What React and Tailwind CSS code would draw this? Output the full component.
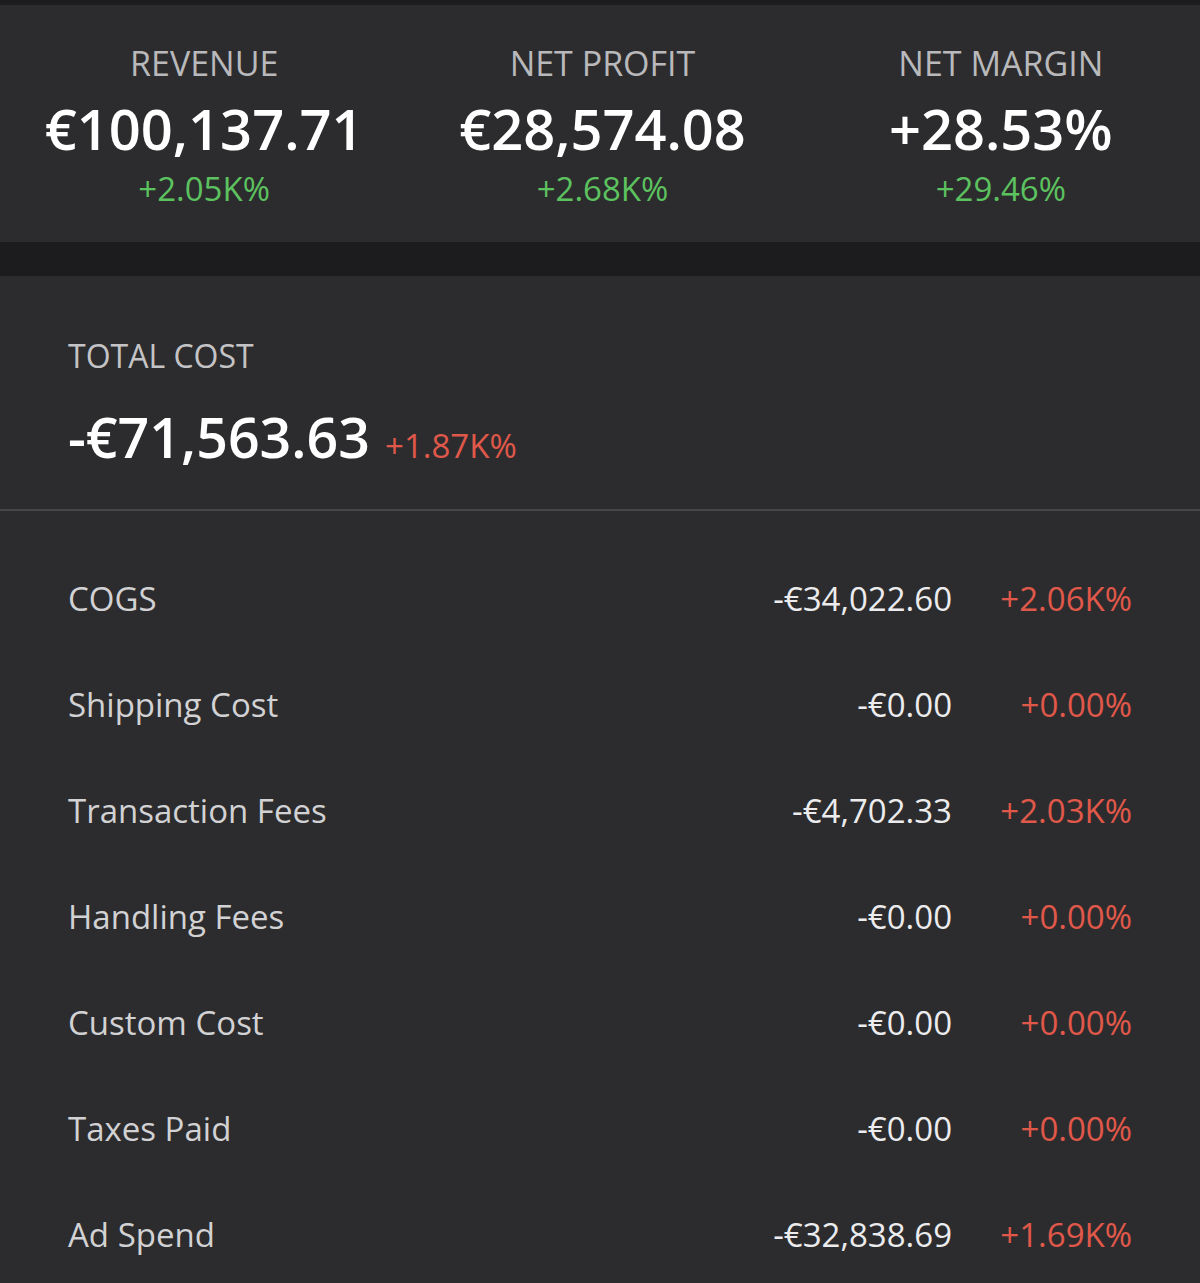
const stats = [
  { label: 'REVENUE', value: '€100,137.71', change: '+2.05K%' },
  { label: 'NET PROFIT', value: '€28,574.08', change: '+2.68K%' },
  { label: 'NET MARGIN', value: '+28.53%', change: '+29.46%' },
];

const costs = [
  { label: 'COGS', value: '-€34,022.60', change: '+2.06K%' },
  { label: 'Shipping Cost', value: '-€0.00', change: '+0.00%' },
  { label: 'Transaction Fees', value: '-€4,702.33', change: '+2.03K%' },
  { label: 'Handling Fees', value: '-€0.00', change: '+0.00%' },
  { label: 'Custom Cost', value: '-€0.00', change: '+0.00%' },
  { label: 'Taxes Paid', value: '-€0.00', change: '+0.00%' },
  { label: 'Ad Spend', value: '-€32,838.69', change: '+1.69K%' },
];

function Stat({ label, value, change }) {
  return (
    <div className="flex flex-col items-center">
      <p className="text-[34px] leading-[40px] text-[#b9b9bb]">{label}</p>
      <p className="mt-[13px] text-[56px] font-semibold leading-[64px] text-white">{value}</p>
      <p className="mt-[9px] text-[33px] leading-[40px] text-[#5cc25f]">{change}</p>
    </div>
  );
}

export default function App() {
  return (
    <div className="min-h-screen bg-[#1c1c1e] pt-[5px] font-['Open_Sans',sans-serif]">
      <div className="grid h-[237px] grid-cols-3 bg-[#2c2c2e] pl-[5px] pt-[38px]">
        {stats.map((s) => (
          <Stat key={s.label} {...s} />
        ))}
      </div>

      <div className="mt-[34px] bg-[#2c2c2e]">
        <div className="px-[68px] pt-[60px] pb-[38px]">
          <p className="text-[32px] leading-[40px] text-[#c4c4c6]">TOTAL COST</p>
          <div className="mt-[29px] flex items-baseline gap-[15px]">
            <span className="text-[55.5px] font-semibold leading-[64px] text-white">-€71,563.63</span>
            <span className="text-[33px] text-[#e0584a]">+1.87K%</span>
          </div>
        </div>
        <div className="h-[2px] bg-[#47474a]" />

        <div className="px-[68px] pt-[35px] pb-[20px]">
          {costs.map((c) => (
            <div key={c.label} className="flex h-[106px] items-center">
              <span className="flex-1 text-[33px] text-[#d2d2d4]">{c.label}</span>
              <span className="text-[33px] text-[#ececee]">{c.value}</span>
              <span className="w-[180px] text-right text-[33px] text-[#e0584a]">{c.change}</span>
            </div>
          ))}
        </div>
      </div>
    </div>
  );
}
